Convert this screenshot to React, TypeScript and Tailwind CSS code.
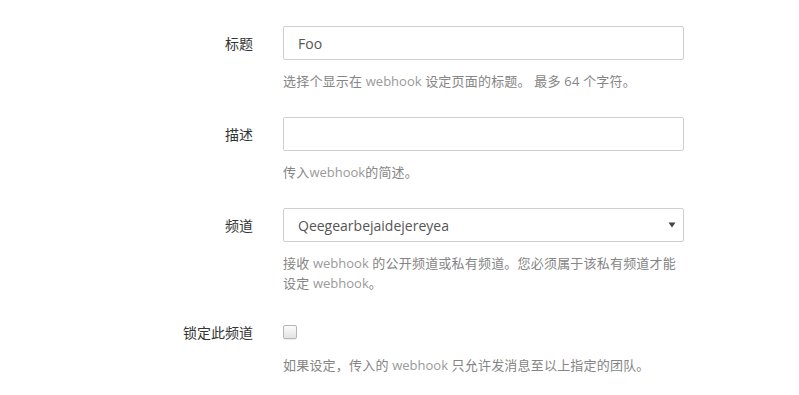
import React from "react";

const font = { fontFamily: '"Open Sans", "Noto Sans CJK SC", sans-serif' };

function Row({ label, children, help, rowH = 34, mb = "mb-[26px]", helpMt = "mt-[11px]" }: { label: string; children: React.ReactNode; help: React.ReactNode; rowH?: number; mb?: string; helpMt?: string }) {
  return (
    <div className={`flex ${mb}`}>
      <div className="w-[253px] shrink-0 flex justify-end items-center text-[14px] text-[#333]" style={{ height: rowH }}>
        {label}
      </div>
      <div className="ml-[30px] w-[401px] shrink-0">
        {children}
        <div className={`${helpMt} text-[13px] leading-[20px] text-[#858585] tracking-[0.2px]`}>{help}</div>
      </div>
    </div>
  );
}

const W = () => <span className="text-[#9a9a9a] tracking-normal">webhook</span>;

export default function App() {
  return (
    <div className="w-[799px] h-[395px] bg-white pt-[26px]" style={font}>
      <Row label="标题" help={<span className="whitespace-nowrap">选择个显示在 <W /> 设定页面的标题。 最多 64 个字符。</span>}>
        <div className="h-[34px] border border-[#cfcfcf] rounded-[2px] flex items-center pl-[14px] text-[14px] text-[#555]">Foo</div>
      </Row>
      <Row label="描述" help={<span className="whitespace-nowrap">传入<W />的简述。</span>}>
        <div className="h-[34px] border border-[#cfcfcf] rounded-[2px]"></div>
      </Row>
      <Row
        label="频道"
        help={
          <>
            <div className="whitespace-nowrap">接收 <W /> 的公开频道或私有频道。您必须属于该私有频道才能</div>
            <div className="whitespace-nowrap">设定 <W />。</div>
          </>
        }
      >
        <div className="h-[34px] border border-[#cfcfcf] rounded-[2px] flex items-center justify-between pl-[14px] pr-[6px] text-[14px] text-[#555]">
          <span>Qeegearbejaidejereyea</span>
          <svg width="8" height="6" viewBox="0 0 8 6" className="mr-[1px]">
            <polygon points="0.5,0.5 7.5,0.5 4,5.5" fill="#444" />
          </svg>
        </div>
      </Row>
      <Row
        label="锁定此频道"
        rowH={26}
        mb="mb-0"
        helpMt="mt-[10px]"
        help={<span className="whitespace-nowrap">如果设定，传入的 <W /> 只允许发消息至以上指定的团队。</span>}
      >
        <div className="h-[26px] flex items-center">
          <div className="w-[14px] h-[14px] rounded-[2px] border border-[#b5b5b5] bg-gradient-to-b from-[#fbfbfb] to-[#e2e2e2] shadow-[0_1px_1px_rgba(0,0,0,0.08)]"></div>
        </div>
      </Row>
    </div>
  );
}
